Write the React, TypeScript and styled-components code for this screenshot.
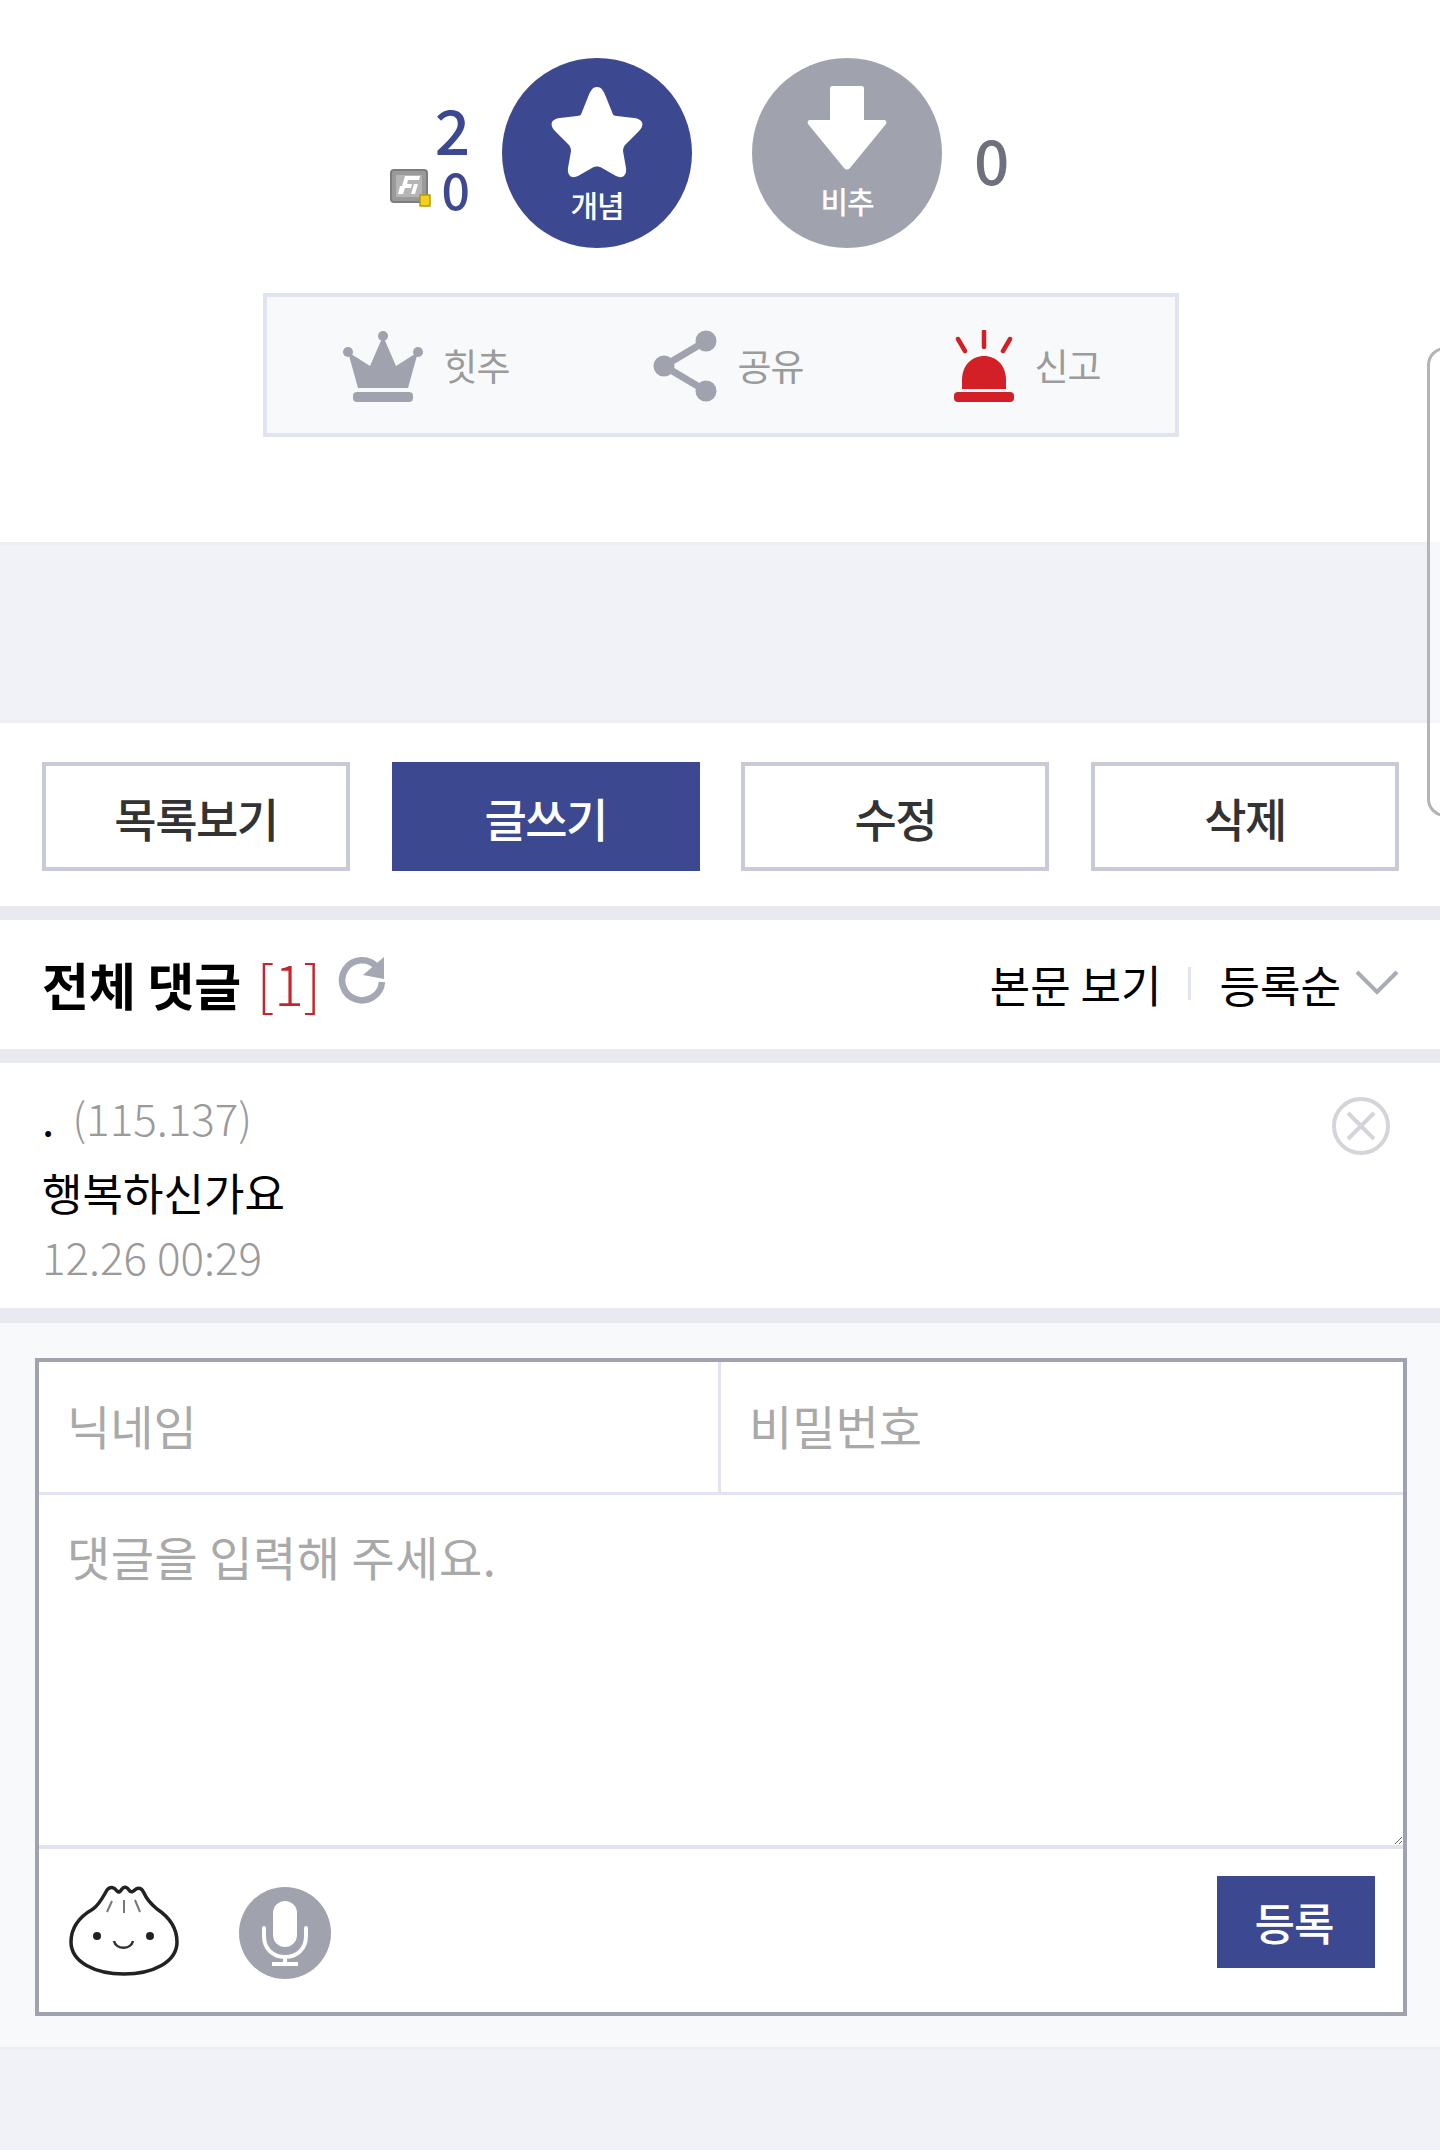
import React from 'react';
import styled, { createGlobalStyle } from 'styled-components';

const navy = '#3c488f';
const grey = '#a0a2ae';

const GlobalStyle = createGlobalStyle`
    html, body {
        margin: 0;
        padding: 0;
        background: #fff;
    }
    * {
        box-sizing: border-box;
    }
    body {
        font-family: "Noto Sans CJK KR", "Noto Sans", sans-serif;
        color: #000;
    }
`;

const Page = styled.div`
    width: 1440px;
    height: 2150px;
    position: relative;
    overflow: hidden;
    background: #fff;
`;

const EdgeHandle = styled.div`
    position: absolute;
    left: 1427px;
    top: 347px;
    width: 40px;
    height: 470px;
    border: 3px solid #b4b4b6;
    border-radius: 18px;
    background: rgba(255, 255, 255, 0.45);
`;

const VoteSection = styled.section`
    height: 545px;
    padding-top: 58px;
    border-bottom: 3px solid #eceef3;
`;

const VoteRow = styled.div`
    display: grid;
    grid-template-columns: 442px 190px 190px 1fr;
    column-gap: 60px;
    height: 190px;
    & > *:first-child {
        margin-right: -28px;
    }
`;

const RecommendCounts = styled.div`
    display: flex;
    flex-direction: column;
    align-items: flex-end;
    padding-top: 37px;
    color: ${navy};
    font-weight: 500;
`;

const BigCount = styled.div`
    font-size: 62px;
    line-height: 66px;
    height: 63px;
`;

const SmallCountRow = styled.div`
    display: flex;
    align-items: center;
    gap: 10px;
    font-size: 50px;
    line-height: 60px;
`;

const VoteCircle = styled.button<{ $bg: string }>`
    width: 190px;
    height: 190px;
    border: 0;
    padding: 0;
    border-radius: 50%;
    background: ${p => p.$bg};
    color: #fff;
    display: flex;
    flex-direction: column;
    align-items: center;
    font-family: inherit;
`;

const VoteIcon = styled.svg<{ $w: number; $h: number }>`
    width: ${p => p.$w}px;
    height: ${p => p.$h}px;
    margin-top: 28px;
    flex: none;
`;

const VoteLabel = styled.span<{ $top: number }>`
    font-size: 30px;
    line-height: 36px;
    font-weight: 500;
    margin-top: ${p => p.$top}px;
    letter-spacing: -1px;
`;

const DownCount = styled.div`
    color: #6e707c;
    font-size: 62px;
    font-weight: 500;
    line-height: 76px;
    padding-top: 62px;
    margin-left: -28px;
`;

const ActionBox = styled.div`
    width: 916px;
    height: 144px;
    margin: 45px 0 0 263px;
    background: #f8f9fb;
    border: 4px solid #e1e4f0;
    display: flex;
    align-items: center;
    justify-content: center;
    gap: 144px;
    padding-left: 2px;
`;

const ActionItem = styled.div<{ $shift?: number }>`
    display: flex;
    align-items: center;
    gap: 20px;
    margin-left: ${p => p.$shift ?? 0}px;
    color: #9b9b9b;
    font-size: 37px;
    line-height: 72px;
    letter-spacing: -1px;
`;

const ActionIcon = styled.svg`
    margin-top: 2px;
    flex: none;
`;

const GreyBand = styled.div`
    height: 178px;
    background: #f0f2f8;
    border-bottom: 3px solid #eceef3;
`;

const ButtonRow = styled.div`
    height: 183px;
    padding: 39px 41px 0 42px;
    display: flex;
    justify-content: space-between;
    align-items: flex-start;
`;

const BoardButton = styled.button<{ $primary?: boolean }>`
    width: 308px;
    height: 109px;
    border: 4px solid ${p => (p.$primary ? navy : '#c8cad8')};
    background: ${p => (p.$primary ? navy : '#fff')};
    color: ${p => (p.$primary ? '#fff' : '#333')};
    font-family: inherit;
    font-size: 46px;
    font-weight: 500;
    letter-spacing: -1.5px;
    padding: 0;
`;

const Bar = styled.div<{ $tall?: boolean }>`
    height: ${p => (p.$tall ? 15 : 14)}px;
    background: #e9eaf0;
`;

const CommentHeader = styled.div`
    height: 129px;
    display: flex;
    align-items: center;
    justify-content: space-between;
    padding: 0 41px 0 42px;
`;

const TitleGroup = styled.div`
    display: flex;
    align-items: center;
    gap: 16px;
`;

const Title = styled.h2`
    margin: 0;
    font-size: 51px;
    line-height: 64px;
    font-weight: 700;
    margin-top: -4px;
`;

const TitleCount = styled.span`
    color: #c7252c;
    font-size: 55px;
    font-weight: 300;
    margin-left: 4px;
`;

const RefreshIcon = styled.svg`
    width: 50px;
    height: 50px;
    margin-top: -10px;
`;

const SortGroup = styled.div`
    display: flex;
    align-items: center;
    font-size: 44px;
    line-height: 60px;
    margin-top: -2px;
`;

const SortDivider = styled.span`
    width: 3px;
    height: 33px;
    background: #e1e4f0;
    margin: 0 29px 0 26px;
`;

const Chevron = styled.svg`
    width: 44px;
    height: 26px;
    margin-left: 14px;
    margin-top: -4px;
`;

const Comment = styled.article`
    position: relative;
    height: 245px;
    padding: 21px 42px 0;
    font-size: 44px;
    line-height: 67px;
`;

const CommentLine = styled.div<{ $muted?: boolean; $h: number }>`
    height: ${p => p.$h}px;
    color: ${p => (p.$muted ? '#9a9a9a' : '#000')};
    font-weight: ${p => (p.$muted ? 300 : 400)};
`;

const Ip = styled.span`
    color: #9a9a9a;
    font-weight: 300;
    margin-left: 18px;
`;

const CloseIcon = styled.svg`
    position: absolute;
    top: 33px;
    right: 49px;
    width: 60px;
    height: 60px;
`;

const FormArea = styled.div`
    height: 727px;
    background: #f8f9fb;
    padding: 35px 33px 0 35px;
    border-bottom: 3px solid #eceef3;
`;

const FormBox = styled.form`
    height: 658px;
    border: 4px solid ${grey};
    background: #fff;
    display: flex;
    flex-direction: column;
`;

const IdentityRow = styled.div`
    height: 133px;
    flex: none;
    display: grid;
    grid-template-columns: 682px 1fr;
    border-bottom: 3px solid #e1e4f0;
`;

const fieldText = `
    font-family: "Noto Sans CJK KR", "Noto Sans", sans-serif;
    font-size: 47px;
    color: #333;
    border: 0;
    outline: 0;
    background: #fff;
    &::placeholder {
        color: #a9a9a9;
        opacity: 1;
    }
`;

const IdentityInput = styled.input<{ $split?: boolean }>`
    ${fieldText}
    width: 100%;
    height: 100%;
    padding: 0 0 5px 28px;
    border-right: ${p => (p.$split ? '3px solid #e1e4f0' : '0')};
`;

const MemoInput = styled.textarea`
    ${fieldText}
    display: block;
    flex: none;
    width: 100%;
    height: 350px;
    padding: 27px 28px;
    line-height: 1.45;
    letter-spacing: 0.5px;
    resize: vertical;
`;

const FormFooter = styled.div`
    flex: 1;
    border-top: 4px solid #e1e4f0;
    display: flex;
    align-items: flex-start;
    padding: 27px 28px 0 30px;
`;

const BunIcon = styled.svg`
    width: 110px;
    height: 92px;
    margin-top: 8px;
`;

const MicIcon = styled.svg`
    width: 92px;
    height: 92px;
    margin-left: 60px;
    margin-top: 11px;
`;

const SubmitButton = styled.button`
    width: 158px;
    height: 92px;
    margin-left: auto;
    border: 0;
    padding: 0 4px 0 0;
    background: ${navy};
    color: #fff;
    font-family: inherit;
    font-size: 44px;
    font-weight: 500;
    letter-spacing: -1px;
`;

const BottomBand = styled.div`
    height: 100px;
    background: #f0f2f8;
`;

const App = () => {
    return <Page>
        <GlobalStyle />
        <VoteSection>
            <VoteRow>
                <RecommendCounts>
                    <BigCount>2</BigCount>
                    <SmallCountRow>
                        <svg width="42" height="38" viewBox="0 0 42 38">
                            <rect x="1" y="1" width="36" height="32" rx="3" fill="#9a9a9a" stroke="#7d7d7d" strokeWidth="2" />
                            <rect x="6" y="6" width="26" height="22" fill="#b5b5b5" />
                            <path d="M8 25 L13 25 L15 19 L21 19 L22 15 L17 15 L18 11 L29 11 L30 7 L15 7 L12 17 L10 17 Z" fill="#fff" />
                            <path d="M21 25 L24 15 L28 15 L25 25 Z" fill="#fff" />
                            <rect x="30" y="26" width="10" height="11" fill="#f7d117" stroke="#b59a10" strokeWidth="1.5" />
                        </svg>
                        <span>0</span>
                    </SmallCountRow>
                </RecommendCounts>
                <VoteCircle $bg={navy}>
                    <VoteIcon $w={92} $h={92} viewBox="0 0 92 92">
                        <path d="M46 1 C51 1 53 6 55 11 L61 26 C62 29 63 30 66 30 L83 32 C92 33 94 39 88 45 L75 58 C73 60 72 62 72 65 L75 82 C76 90 71 93 65 90 L51 82 C48 80 44 80 41 82 L27 90 C21 93 16 90 17 82 L20 65 C20 62 19 60 17 58 L4 45 C-2 39 0 33 9 32 L26 30 C29 30 30 29 31 26 L37 11 C39 6 41 1 46 1 Z" fill="#fff" />
                    </VoteIcon>
                    <VoteLabel $top={8}>개념</VoteLabel>
                </VoteCircle>
                <VoteCircle $bg={grey}>
                    <VoteIcon $w={80} $h={84} viewBox="0 0 80 84">
                        <path d="M23 2 C23 1 24 0 25 0 L55 0 C56 0 57 1 57 2 L57 34 L77 34 C79 34 80 36 79 38 L43 82 C41 84 39 84 37 82 L1 38 C0 36 1 34 3 34 L23 34 Z" fill="#fff" />
                    </VoteIcon>
                    <VoteLabel $top={12}>비추</VoteLabel>
                </VoteCircle>
                <DownCount>0</DownCount>
            </VoteRow>
            <ActionBox>
                <ActionItem>
                    <ActionIcon width="80" height="72" viewBox="0 0 80 72">
                        <circle cx="40" cy="6" r="5" fill="#a0a2ae" />
                        <circle cx="5" cy="22" r="5" fill="#a0a2ae" />
                        <circle cx="75" cy="22" r="5" fill="#a0a2ae" />
                        <path d="M40 6 L53 36 L75 22 L65 58 L15 58 L5 22 L27 36 Z" fill="#a0a2ae" />
                        <rect x="10" y="62" width="60" height="10" rx="4" fill="#a0a2ae" />
                    </ActionIcon>
                    <span>힛추</span>
                </ActionItem>
                <ActionItem>
                    <ActionIcon width="64" height="72" viewBox="0 0 64 72">
                        <path d="M53 11 L11 36 L53 61" fill="none" stroke="#a0a2ae" strokeWidth="7" />
                        <circle cx="53" cy="11" r="10.5" fill="#a0a2ae" />
                        <circle cx="11" cy="36" r="10.5" fill="#a0a2ae" />
                        <circle cx="53" cy="61" r="10.5" fill="#a0a2ae" />
                    </ActionIcon>
                    <span>공유</span>
                </ActionItem>
                <ActionItem $shift={5}>
                    <ActionIcon width="62" height="72" viewBox="0 0 62 72">
                        <path d="M9 59 L9 50 C9 35 19 26 31 26 C43 26 53 35 53 50 L53 59 Z" fill="#d32027" />
                        <rect x="1" y="62" width="60" height="10" rx="4" fill="#d32027" />
                        <path d="M31 1 L31 17 M5 9 L12 21 M57 9 L50 21" stroke="#d32027" strokeWidth="4.5" strokeLinecap="round" />
                    </ActionIcon>
                    <span>신고</span>
                </ActionItem>
            </ActionBox>
        </VoteSection>
        <GreyBand />
        <ButtonRow>
            <BoardButton>목록보기</BoardButton>
            <BoardButton $primary>글쓰기</BoardButton>
            <BoardButton>수정</BoardButton>
            <BoardButton>삭제</BoardButton>
        </ButtonRow>
        <Bar />
        <CommentHeader>
            <TitleGroup>
                <Title>전체 댓글 <TitleCount>[1]</TitleCount></Title>
                <RefreshIcon viewBox="0 0 50 50">
                    <path d="M40 12 A20 20 0 1 0 45 27" fill="none" stroke="#a5a7b4" strokeWidth="6.5" />
                    <path d="M47 2 L47 24 L26 20 Z" fill="#a5a7b4" />
                </RefreshIcon>
            </TitleGroup>
            <SortGroup>
                <span>본문 보기</span>
                <SortDivider />
                <span>등록순</span>
                <Chevron viewBox="0 0 44 26">
                    <path d="M2 3 L22 23 L42 3" fill="none" stroke="#a9abb8" strokeWidth="4" />
                </Chevron>
            </SortGroup>
        </CommentHeader>
        <Bar />
        <Comment>
            <CommentLine $h={75}>.<Ip>(115.137)</Ip></CommentLine>
            <CommentLine $h={64}>행복하신가요</CommentLine>
            <CommentLine $h={70} $muted>12.26 00:29</CommentLine>
            <CloseIcon viewBox="0 0 60 60">
                <circle cx="30" cy="30" r="27" fill="none" stroke="#d3d5da" strokeWidth="4" />
                <path d="M17 17 L43 43 M43 17 L17 43" stroke="#d3d5da" strokeWidth="4" />
            </CloseIcon>
        </Comment>
        <Bar $tall />
        <FormArea>
            <FormBox>
                <IdentityRow>
                    <IdentityInput $split placeholder="닉네임" />
                    <IdentityInput placeholder="비밀번호" />
                </IdentityRow>
                <MemoInput placeholder="댓글을 입력해 주세요." />
                <FormFooter>
                    <BunIcon viewBox="0 0 110 92">
                        <path d="M38 6 C41 2 45 3 48 7 C50 9 51 8 53 5 C55 2 58 3 60 6 C62 9 64 8 67 5 C71 3 73 5 75 9 C78 16 82 20 88 25 C100 33 108 44 108 58 C108 78 84 90 55 90 C26 90 2 78 2 58 C2 44 10 33 24 25 C30 21 34 13 38 6 Z" fill="#fff" stroke="#222" strokeWidth="3.5" />
                        <path d="M43 17 L38 28 M55 16 L55 29 M66 16 L71 28" stroke="#777" strokeWidth="2" fill="none" />
                        <circle cx="28" cy="52" r="4" fill="#222" />
                        <circle cx="81" cy="52" r="4" fill="#222" />
                        <path d="M45 57 C47 66 62 66 64 57" fill="none" stroke="#333" strokeWidth="2.5" />
                    </BunIcon>
                    <MicIcon viewBox="0 0 92 92">
                        <circle cx="46" cy="46" r="46" fill="#a0a2ae" />
                        <rect x="34" y="14" width="24" height="46" rx="12" fill="#fff" />
                        <path d="M25 41 L25 49 C25 62 34 70 46 70 C58 70 67 62 67 49 L67 41" fill="none" stroke="#fff" strokeWidth="4" strokeLinecap="round" />
                        <path d="M46 70 L46 77 M33 77 L59 77" stroke="#fff" strokeWidth="4" />
                    </MicIcon>
                    <SubmitButton type="button">등록</SubmitButton>
                </FormFooter>
            </FormBox>
        </FormArea>
        <BottomBand />
        <EdgeHandle />
    </Page>;
};

export default App;
